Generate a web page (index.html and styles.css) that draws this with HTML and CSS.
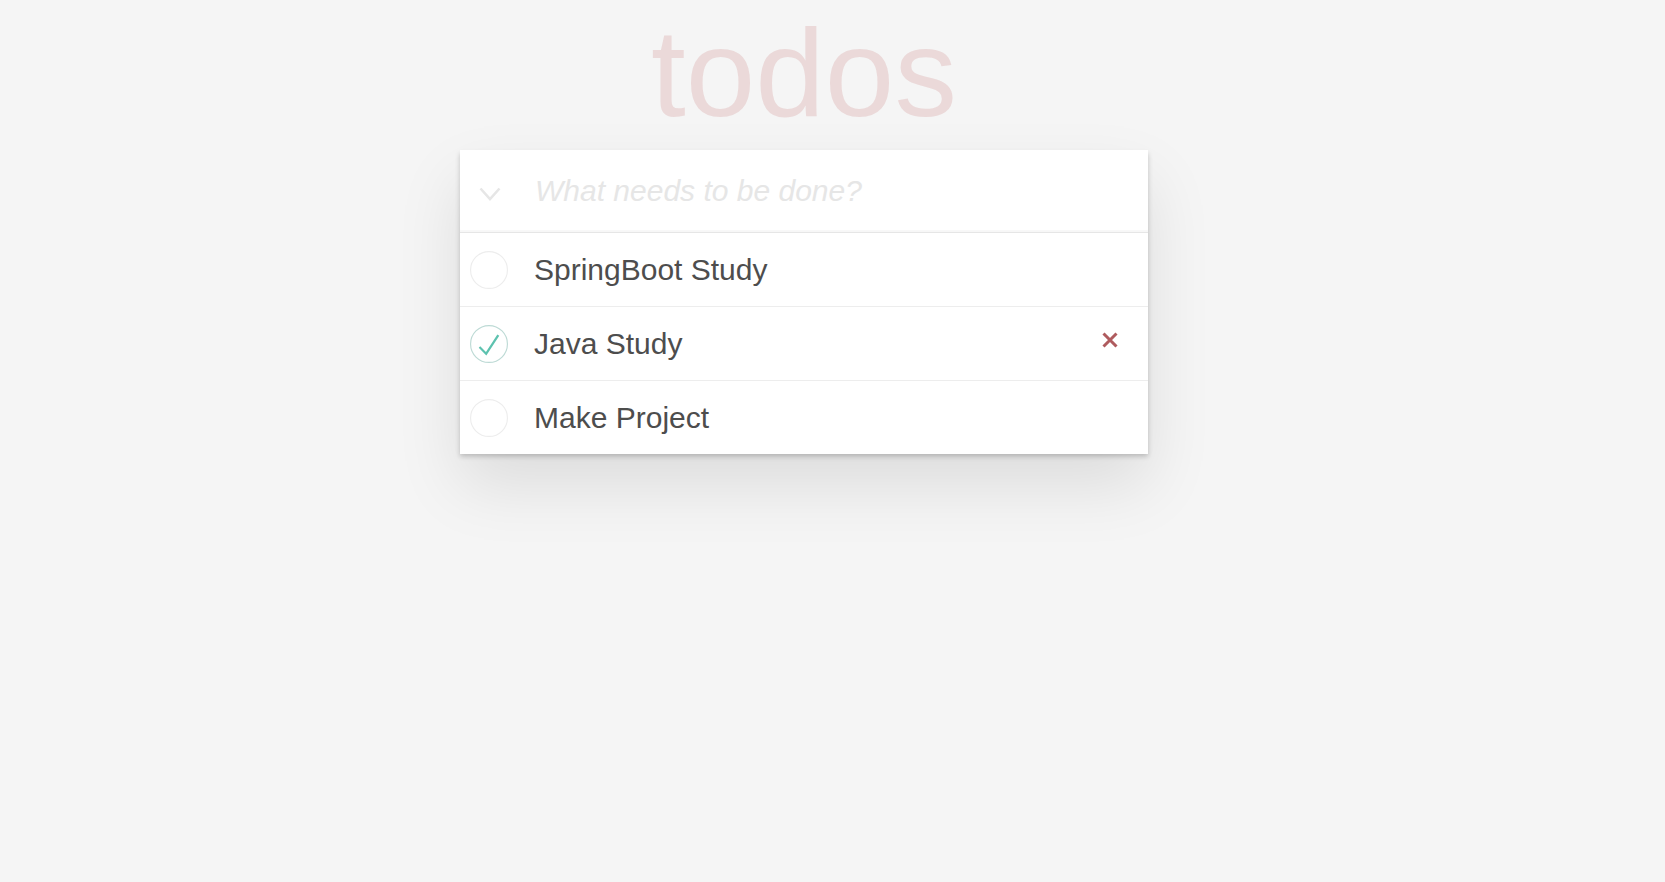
FILE: index.html
```html
<!DOCTYPE html>
<html lang="en">
<head>
<meta charset="utf-8">
<title>todos</title>
<link rel="stylesheet" href="styles.css">
</head>
<body>
<section class="todoapp">
  <h1 class="title">todos</h1>
  <div class="card">
    <header class="new-row">
      <div class="toggle-all">
        <svg width="22" height="14" viewBox="0 0 22 14"><polyline points="1.5,1.5 11,12 20.5,1.5" fill="none" stroke="#e6e6e6" stroke-width="2.6"/></svg>
      </div>
      <input class="new-todo" type="text" placeholder="What needs to be done?">
    </header>
    <ul class="todo-list">
      <li class="todo">
        <span class="toggle">
          <svg width="38" height="38" viewBox="0 0 100 100"><circle cx="50" cy="50" r="48.5" fill="none" stroke="#ededed" stroke-width="3"/></svg>
        </span>
        <span class="label">SpringBoot Study</span>
      </li>
      <li class="todo">
        <span class="toggle">
          <svg width="38" height="38" viewBox="0 0 100 100"><circle cx="50" cy="50" r="48.5" fill="none" stroke="#bddad5" stroke-width="3"/><path d="M72 25L42 71 27 56l-4 4 20 20 34-52z" fill="#5dc2af"/></svg>
        </span>
        <span class="label">Java Study</span>
        <span class="destroy">
          <svg width="16" height="16" viewBox="0 0 16 16"><path d="M1.5 1.5L14.5 14.5M14.5 1.5L1.5 14.5" stroke="#af5b5e" stroke-width="3"/></svg>
        </span>
      </li>
      <li class="todo last">
        <span class="toggle">
          <svg width="38" height="38" viewBox="0 0 100 100"><circle cx="50" cy="50" r="48.5" fill="none" stroke="#ededed" stroke-width="3"/></svg>
        </span>
        <span class="label">Make Project</span>
      </li>
    </ul>
  </div>
</section>
</body>
</html>
```

FILE: styles.css
```css
html, body {
  margin: 0;
  padding: 0;
}

body {
  background: #f5f5f5;
  color: #4d4d4d;
  font-family: "Liberation Sans", Arial, Helvetica, sans-serif;
  min-height: 882px;
}

.todoapp {
  width: 688px;
  margin: 0 0 0 calc(50% - 372.5px);
  padding-top: 1px;
}

.title {
  margin: 0;
  height: 149px;
  font-size: 125px;
  line-height: 144px;
  font-weight: 100;
  text-align: center;
  color: rgba(175, 47, 47, 0.14);
}

.card {
  background: #fff;
  box-shadow: 0 2.5px 5px 0 rgba(0, 0, 0, 0.2), 0 31px 62px 0 rgba(0, 0, 0, 0.1);
}

.new-row {
  display: flex;
  height: 82px;
  box-shadow: inset 0 -2px 1px rgba(0, 0, 0, 0.03);
}

.toggle-all {
  width: 75px;
  flex: none;
}

.toggle-all svg {
  display: block;
  margin: 37px 0 0 19px;
}

.new-todo {
  flex: 1;
  min-width: 0;
  border: none;
  outline: none;
  background: transparent;
  padding: 20px 20px 20px 0;
  height: 82px;
  box-sizing: border-box;
  font-family: inherit;
  font-size: 30px;
  line-height: 42px;
  color: #4d4d4d;
}

.new-todo::placeholder {
  font-style: italic;
  color: #e6e6e6;
}

.todo-list {
  list-style: none;
  margin: 0;
  padding: 0;
  border-top: 1px solid #e6e6e6;
}

.todo {
  display: flex;
  align-items: center;
  height: 73px;
  border-bottom: 1px solid #ededed;
}

.todo.last {
  border-bottom: none;
}

.toggle {
  width: 74px;
  flex: none;
}

.toggle svg {
  display: block;
  margin-left: 10px;
}

.label {
  font-size: 30px;
  line-height: 36px;
  color: #4d4d4d;
  flex: 1;
}

.destroy {
  flex: none;
  margin: 0 30px 8px 0;
}

.destroy svg {
  display: block;
}
```
